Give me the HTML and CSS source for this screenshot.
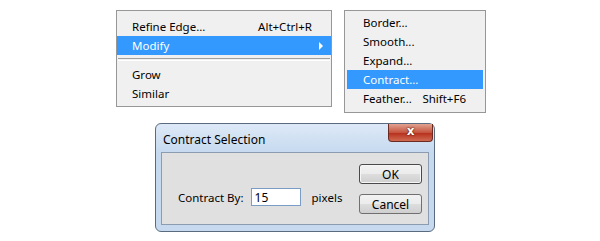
FILE: index.html
```html
<!DOCTYPE html>
<html lang="en">
<head>
    <meta charset="UTF-8">
    <title>Contract Selection</title>
    <link rel="stylesheet" href="styles.css">
</head>
<body>
    <div class="menus">
        <div class="menu menu-select">
            <div class="item"><span>Refine Edge...</span><span class="key">Alt+Ctrl+R</span></div>
            <div class="item active"><span>Modify</span><span class="arrow"></span></div>
            <div class="sep"></div>
            <div class="item"><span>Grow</span></div>
            <div class="item"><span>Similar</span></div>
        </div>
        <div class="menu menu-modify">
            <div class="item"><span>Border...</span></div>
            <div class="item"><span>Smooth...</span></div>
            <div class="item"><span>Expand...</span></div>
            <div class="item active"><span>Contract...</span></div>
            <div class="item"><span>Feather...</span><span class="key">Shift+F6</span></div>
        </div>
    </div>

    <div class="dialog">
        <div class="titlebar">
            <span class="title">Contract Selection</span>
            <div class="close">x</div>
        </div>
        <div class="client">
            <div class="field">
                <label for="amount">Contract By:</label>
                <input type="text" id="amount" value="15">
                <span>pixels</span>
            </div>
            <div class="buttons">
                <button class="default">OK</button>
                <button>Cancel</button>
            </div>
        </div>
    </div>
</body>
</html>
```

FILE: styles.css
```css
body {
    margin: 0;
    background-color: #ffffff;
    font-family: "Noto Sans", "Open Sans", sans-serif;
    font-size: 11.5px;
    color: #000;
}

.menus {
    display: flex;
    align-items: flex-start;
    gap: 12px;
    padding: 10px 0 0 116px;
}

.menu {
    background-color: #f0f0f0;
    border: 1px solid #979797;
}

.menu-select {
    width: 214px;
    padding: 6px 0 3px;
}

.menu-modify {
    width: 140px;
    padding: 2px 0 4px;
}

.item {
    display: flex;
    justify-content: space-between;
    align-items: center;
    height: 19px;
    padding: 0 19px 0 15px;
}

.menu-modify .item {
    margin: 0 2px;
    padding: 0 17px 0 16px;
}

.item.active {
    background-color: #3399ff;
    color: #ffffff;
}

.menu-select .item.active {
    padding-right: 8px;
}

.arrow {
    width: 0;
    height: 0;
    border-top: 4px solid transparent;
    border-bottom: 4px solid transparent;
    border-left: 4px solid #ffffff;
}

.sep {
    height: 1px;
    margin: 3px 1px 4px;
    border-top: 1px solid #a0a0a0;
    border-bottom: 1px solid #ffffff;
}

/* Dialog */
.dialog {
    width: 268px;
    margin: 10px 0 0 155px;
    border: 1px solid #5a6b80;
    border-radius: 6px;
    background: linear-gradient(#dde9f7, #c5d9ef 30px, #c6d9ef);
    padding: 0 5px 6px 5px;
}

.titlebar {
    display: flex;
    justify-content: space-between;
    height: 28px;
}

.title {
    margin: 7px 0 0 2px;
    font-size: 12px;
    color: #000;
}

.close {
    width: 43px;
    height: 17px;
    margin-right: -4px;
    border: 1px solid #6b2a22;
    border-top: none;
    border-radius: 0 0 4px 4px;
    background: linear-gradient(#e1a290, #c6553f 50%, #b8321f 55%, #d06a52);
    color: #ffffff;
    font-family: "DejaVu Sans", sans-serif;
    font-weight: bold;
    font-size: 12px;
    line-height: 15px;
    text-align: center;
    text-shadow: 0 0 2px #4a1810, 0 0 1px #4a1810;
}

.client {
    display: flex;
    height: 60px;
    background-color: #e0e0e0;
    border: 1px solid #8c9cb0;
    padding: 11px 6px 0 16px;
}

.field {
    display: flex;
    align-items: center;
    margin-top: 24px;
    height: 18px;
}

.field input {
    width: 45px;
    height: 16px;
    margin: 0 11px 0 7px;
    padding: 0 0 0 3px;
    border: 1px solid #7a9cc5;
    font-family: inherit;
    font-size: 12px;
}

.buttons {
    margin-left: auto;
    display: flex;
    flex-direction: column;
    gap: 10px;
}

button {
    width: 63px;
    height: 20px;
    padding: 0;
    border: 1px solid #707070;
    border-radius: 3px;
    background: linear-gradient(#f2f2f2, #ebebeb 50%, #dddddd 51%, #cfcfcf);
    font-family: inherit;
    font-size: 12px;
    color: #000;
}

button.default {
    border-color: #4a4a4a;
    box-shadow: inset 0 0 0 1px #f6f6f6;
}
```
